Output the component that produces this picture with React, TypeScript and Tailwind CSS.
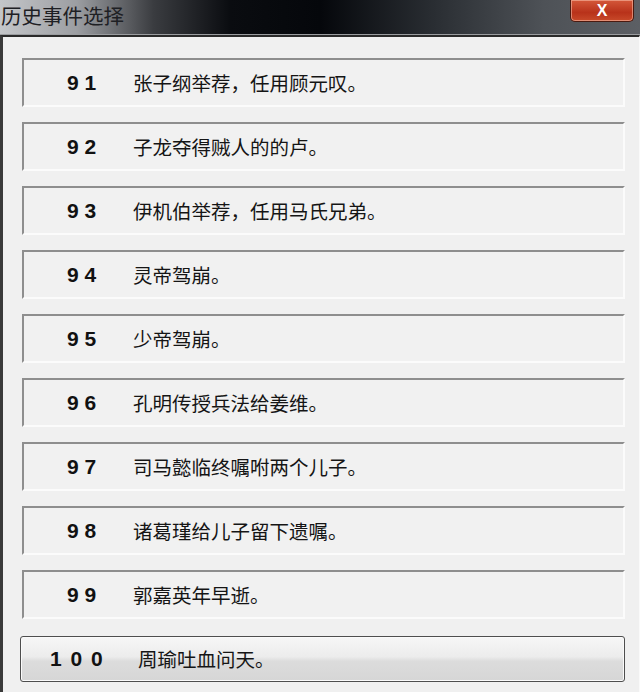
import React from "react";

const events: [string, string][] = [
  ["9 1", "张子纲举荐，任用顾元叹。"],
  ["9 2", "子龙夺得贼人的的卢。"],
  ["9 3", "伊机伯举荐，任用马氏兄弟。"],
  ["9 4", "灵帝驾崩。"],
  ["9 5", "少帝驾崩。"],
  ["9 6", "孔明传授兵法给姜维。"],
  ["9 7", "司马懿临终嘱咐两个儿子。"],
  ["9 8", "诸葛瑾给儿子留下遗嘱。"],
  ["9 9", "郭嘉英年早逝。"],
];

const cjk = { fontFamily: '"Noto Sans CJK SC", "Noto Sans", sans-serif' };
const num = { fontFamily: '"Liberation Sans", Arial, sans-serif' };

export default function App() {
  return (
    <div className="relative h-[692px] w-[640px] overflow-hidden bg-[#f0f0f0]">
      {/* title bar */}
      <div className="relative h-[35px] border-b border-[#9a9c9f] bg-[linear-gradient(to_right,#c4c6c9_0%,#9c9ea2_12%,#3a3c40_24%,#0a0c10_36%,#05070b_50%,#2a2e33_68%,#4e5257_85%,#5c5f64_100%)]">
        <span
          className="absolute left-[1px] top-[1px] text-[20.5px] leading-[28px] text-[#1e2024]"
          style={cjk}
        >
          历史事件选择
        </span>
        <div className="absolute right-[6px] top-0 flex h-[22px] w-[64px] items-center justify-center rounded-b-[5px] border border-t-0 border-[#4a1a10] bg-[linear-gradient(to_bottom,#d4583a_0%,#b8321a_60%,#c84a2a_100%)] shadow-[inset_0_0_0_1px_rgba(255,210,190,0.5)]">
          <span className="text-[16px] font-bold leading-[16px] text-white" style={num}>
            X
          </span>
        </div>
      </div>

      {/* body */}
      <div className="h-full border-l-[3px] border-r border-t-[2px] border-l-[#3a3a3a] border-r-[#fafafa] border-t-[#2a2a2a] pl-[19px] pr-[14px] pt-[21px]">
        <div className="flex flex-col gap-[15px]">
          {events.map(([n, t]) => (
            <div
              key={n}
              className="flex h-[49px] items-center border-b-2 border-l-2 border-r-2 border-t-2 border-b-[#fbfbfb] border-l-[#8e8e8e] border-r-[#fbfbfb] border-t-[#8e8e8e] bg-[#f1f1f1] pl-[43px]"
            >
              <span className="w-[66px] text-[21px] font-bold text-[#111]" style={num}>
                {n}
              </span>
              <span className="text-[19.5px] text-[#151515]" style={cjk}>
                {t}
              </span>
            </div>
          ))}
          <div className="-ml-[2px] mt-[2px] flex h-[46px] items-center rounded-[3px] border border-[#4e4e4e] bg-[linear-gradient(to_bottom,#f6f6f6_0%,#ececec_45%,#dcdcdc_55%,#d6d6d6_100%)] pl-[29px] shadow-[inset_0_0_0_1px_#fafafa]">
            <span className="w-[88px] text-[21px] font-bold tracking-[1.5px] text-[#111]" style={num}>
              1 0 0
            </span>
            <span className="text-[19.5px] text-[#151515]" style={cjk}>
              周瑜吐血问天。
            </span>
          </div>
        </div>
      </div>
    </div>
  );
}
